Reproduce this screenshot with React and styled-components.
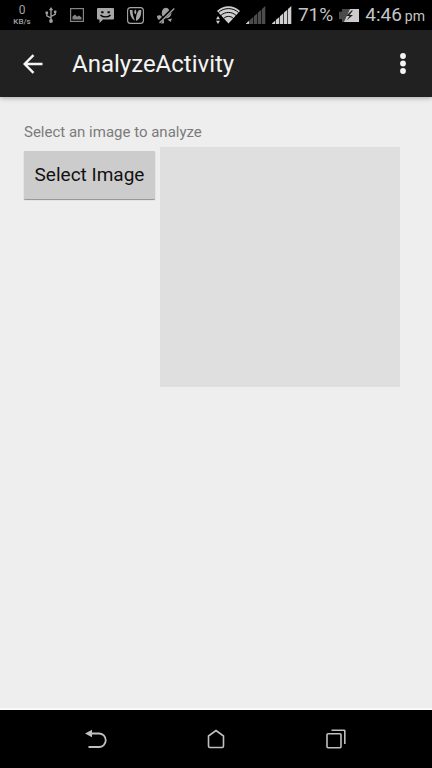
import { useRef } from "react";
import styled, { createGlobalStyle } from "styled-components";

const GlobalStyle = createGlobalStyle`
  * {
    box-sizing: border-box;
  }

  body {
    margin: 0;
    background: #eeeeee;
    font-family: Roboto, "Noto Sans", sans-serif;
  }
`;

const Screen = styled.div`
  display: flex;
  flex-direction: column;
  min-height: 100vh;
`;

// Android status bar
const StatusBar = styled.div`
  display: flex;
  justify-content: space-between;
  align-items: center;
  height: 30px;
  padding: 0 7px 0 12px;
  background: #000000;
  color: #c4c4c4;
`;

const StatusGroup = styled.div`
  display: flex;
  align-items: center;
  gap: ${({ $gap }) => $gap}px;
`;

const NetSpeed = styled.div`
  display: flex;
  flex-direction: column;
  align-items: center;
  width: 20px;
  color: #a0a0a0;
`;

const SpeedValue = styled.span`
  font-size: 12px;
  line-height: 14px;
`;

const SpeedUnit = styled.span`
  font-size: 8px;
  font-weight: 500;
  line-height: 10px;
`;

const StatusText = styled.span`
  font-size: ${({ $small }) => ($small ? 14 : 19)}px;
  line-height: 24px;
`;

const Clock = styled.div`
  display: flex;
  align-items: baseline;
  gap: 3px;
`;

const Icon = styled.svg`
  display: block;
  flex: none;
  width: ${({ $w }) => $w}px;
  height: ${({ $h }) => $h}px;
  color: ${({ $color }) => $color || "currentColor"};
`;

// App bar
const AppBar = styled.header`
  position: relative;
  display: flex;
  align-items: center;
  height: 67px;
  padding: 0 17px;
  background: #212121;
  color: #f5f5f5;
  box-shadow: 0 1px 5px rgba(0, 0, 0, 0.3);
`;

const IconButton = styled.button`
  display: flex;
  justify-content: center;
  align-items: center;
  width: ${({ $w }) => $w}px;
  height: 48px;
  padding: 0;
  border: none;
  background: none;
  color: inherit;
  cursor: pointer;
`;

const Title = styled.h1`
  flex: 1;
  margin: 0 0 0 23px;
  font-size: 24px;
  font-weight: 400;
  line-height: 32px;
`;

// Page content
const Content = styled.main`
  flex: 1;
  padding: 24px 32px 24px 24px;
  background: #eeeeee;
  border-bottom: 2px solid #fafafa;
`;

const Label = styled.label`
  display: block;
  color: #7b7b7b;
  font-size: 15px;
  line-height: 22px;
`;

const PickerRow = styled.div`
  display: flex;
  align-items: flex-start;
  gap: 5px;
  padding-top: 4px;
`;

const SelectButton = styled.button`
  flex: none;
  width: 131px;
  height: 48px;
  margin-top: 4px;
  padding: 0;
  border: none;
  border-radius: 1px;
  background: #cccccc;
  box-shadow: 0 1px 1px rgba(0, 0, 0, 0.4);
  color: #111111;
  font-family: inherit;
  font-size: 19px;
  line-height: 24px;
  cursor: pointer;
`;

const Preview = styled.div`
  flex: 1;
  aspect-ratio: 1;
  background: #dfdfdf;
`;

// Bottom navigation keys
const NavBar = styled.nav`
  display: flex;
  justify-content: center;
  align-items: center;
  gap: 72px;
  height: 58px;
  background: #000000;
  color: #c0c0c0;
`;

function UsbIcon() {
  return (
    <Icon $w={12} $h={16} $color="#a0a0a0" viewBox="0 0 12 16" fill="none" stroke="currentColor" strokeWidth="1.4">
      <path d="M6 2.5v11M6 11 1.8 8.8V6M6 9.5l4.2-2.2V5" />
      <path d="M6 0 8.2 3.2H3.8zM.5 4.5h2.6v2.4H.5z" fill="currentColor" stroke="none" />
      <circle cx="10.2" cy="4.8" r="1.4" fill="currentColor" stroke="none" />
      <circle cx="6" cy="14" r="1.9" fill="currentColor" stroke="none" />
    </Icon>
  );
}

function PictureIcon() {
  return (
    <Icon $w={14} $h={14} $color="#858585" viewBox="0 0 14 14">
      <rect x=".6" y=".6" width="12.8" height="12.8" fill="none" stroke="currentColor" strokeWidth="1.2" />
      <path d="M2.5 11.5V8.5L5 6.5 7 8.8 9 7.5l2.5 2v2z" fill="currentColor" />
    </Icon>
  );
}

function MessageIcon() {
  return (
    <Icon $w={17} $h={15} $color="#a8a8a8" viewBox="0 0 17 15">
      <path d="M1 0h15a1 1 0 0 1 1 1v9.5a1 1 0 0 1-1 1H6L2.5 15v-3.5H1a1 1 0 0 1-1-1V1a1 1 0 0 1 1-1z" fill="currentColor" />
      <path d="M4.2 3.2h2.3v2H4.2zM10.5 3.2h2.3v2h-2.3z" fill="#000" />
      <path d="M3.5 7c2 2.6 8 2.6 10 0" fill="none" stroke="#000" strokeWidth="1.3" />
    </Icon>
  );
}

function MusicIcon() {
  return (
    <Icon $w={17} $h={17} $color="#a8a8a8" viewBox="0 0 17 17">
      <rect x=".6" y=".6" width="15.8" height="15.8" rx="3" fill="none" stroke="currentColor" strokeWidth="1.1" />
      <path d="M2.8 3h2.7c0 4 1 7.6 2.6 10.8C5 12.200 2.8 8.500 2.8 3z" fill="currentColor" />
      <path d="M9 14c-.3-4.500.8-8.500 3-11h2.200c.4 5-1.200 9.200-5.200 11z" fill="currentColor" />
      <path d="M8.300 2.500c1.500 1.800 1.400 3.200 0 5-1.400-1.800-1.500-3.200 0-5z" fill="currentColor" />
    </Icon>
  );
}

function GpsOffIcon() {
  return (
    <Icon $w={18} $h={17} $color="#a0a0a0" viewBox="0 0 18 17">
      <path d="M5.500 3c1-2 4-2.800 5.500-1.500L13 4 6.500 10C4.500 8.500 4.300 5.500 5.500 3zM14.500 5.500c0 3-2 6-6.500 6z" fill="currentColor" />
      <path d="M0 9c1.500-1 4-1 5 1l-3 3C.5 12 0 10.500 0 9zM6 12.500c1.500.5 1.500 2.500.5 4H4z" fill="currentColor" />
      <path d="m10.500 12.500 4.500-1-1.500 3.500z" fill="currentColor" />
      <path d="M1.500 16 16.500 1" stroke="#000" strokeWidth="2.8" />
      <path d="M2.500 16 17.300 1.500" stroke="currentColor" strokeWidth="1.4" />
    </Icon>
  );
}

function WifiIcon() {
  return (
    <Icon $w={24} $h={20} $color="#d0d0d0" viewBox="0 0 24 20">
      <path d="M1 6C7-.5 18-.5 24 6L12.500 18.500z" fill="currentColor" />
      <g fill="none" stroke="#000" strokeWidth="1">
        <path d="M2.500 7.500c5.500-5.200 14.500-5.200 20 0" />
        <path d="M4.800 10.500c4.400-4.100 11-4.100 15.400 0" />
        <path d="M7.500 13.500c3-2.800 7-2.800 10 0" />
      </g>
      <path d="m2 11 2 3.300H0zM2 19l2-3.300H0z" fill="currentColor" />
    </Icon>
  );
}

// Bars grow from left to right, the first `level` of them are lit
function SignalIcon({ level }) {
  return (
    <Icon $w={20} $h={18} viewBox="0 0 20 18">
      {[0, 1, 2, 3, 4].map((bar) => {
        const x = bar * 4;
        return (
          <path
            key={bar}
            d={`M${x} 18V${17.4 - bar * 3.6}l3.3-2.9V18z`}
            fill={bar < level ? "#d0d0d0" : "#4c4c4c"}
          />
        );
      })}
    </Icon>
  );
}

function BatteryIcon() {
  return (
    <Icon $w={20} $h={13} viewBox="0 0 20 14" preserveAspectRatio="none">
      <path d="M3 0h17v14H3v-3H0V3h3z" fill="#4a4a4a" />
      <path d="M11 0h9v14H5z" fill="#cccccc" />
      <path d="m12.5 1.5-5.5 6h3.5L7.5 12.5l6.5-6h-3.5l3.5-5z" fill="#222" />
    </Icon>
  );
}

function App() {
  const fileInput = useRef(null);

  return (
    <>
      <GlobalStyle />
      <Screen>
        <StatusBar>
          <StatusGroup $gap={13}>
            <NetSpeed>
              <SpeedValue>0</SpeedValue>
              <SpeedUnit>KB/s</SpeedUnit>
            </NetSpeed>
            <UsbIcon />
            <PictureIcon />
            <MessageIcon />
            <MusicIcon />
            <GpsOffIcon />
          </StatusGroup>
          <StatusGroup $gap={6}>
            <WifiIcon />
            <SignalIcon level={1} />
            <SignalIcon level={5} />
            <StatusText>71%</StatusText>
            <BatteryIcon />
            <Clock>
              <StatusText>4:46</StatusText>
              <StatusText $small>pm</StatusText>
            </Clock>
          </StatusGroup>
        </StatusBar>

        <AppBar>
          <IconButton $w={32} aria-label="Back">
            <Icon $w={20} $h={20} viewBox="0 0 20 20" fill="none" stroke="currentColor" strokeWidth="2.4">
              <path d="M19.5 10H2M10.5 1.2 1.7 10l8.8 8.8" />
            </Icon>
          </IconButton>
          <Title>AnalyzeActivity</Title>
          <IconButton $w={24} aria-label="More options">
            <Icon $w={6} $h={21} viewBox="0 0 6 21" fill="currentColor">
              <circle cx="3" cy="3" r="2.9" />
              <circle cx="3" cy="10.5" r="2.9" />
              <circle cx="3" cy="18" r="2.9" />
            </Icon>
          </IconButton>
        </AppBar>

        <Content>
          <Label htmlFor="image">Select an image to analyze</Label>
          <input ref={fileInput} id="image" type="file" accept="image/*" hidden />
          <PickerRow>
            <SelectButton type="button" onClick={() => fileInput.current.click()}>
              Select Image
            </SelectButton>
            <Preview />
          </PickerRow>
        </Content>

        <NavBar>
          <IconButton $w={48} aria-label="Back key">
            <Icon $w={22} $h={20} viewBox="0 0 22 20">
              <path d="M5 4.5h9a6.5 6.5 0 0 1 0 13.5H3.5" fill="none" stroke="currentColor" strokeWidth="1.8" />
              <path d="M0 4.5 7 .8v7.4z" fill="currentColor" />
            </Icon>
          </IconButton>
          <IconButton $w={48} aria-label="Home key">
            <Icon $w={18} $h={20} viewBox="0 0 18 20" fill="none" stroke="currentColor" strokeWidth="1.6">
              <path d="M1.5 7 9 1.5 16.5 7v10a1.5 1.5 0 0 1-1.5 1.5H3A1.5 1.5 0 0 1 1.5 17z" />
            </Icon>
          </IconButton>
          <IconButton $w={48} aria-label="Recent apps key">
            <Icon $w={20} $h={20} viewBox="0 0 20 20" fill="none" stroke="currentColor" strokeWidth="1.6">
              <rect x="1" y="4.8" width="14" height="14" rx="1" />
              <path d="M5.5 1.2H18a.8.8 0 0 1 .8.8v13" />
            </Icon>
          </IconButton>
        </NavBar>
      </Screen>
    </>
  );
}

export default App;
